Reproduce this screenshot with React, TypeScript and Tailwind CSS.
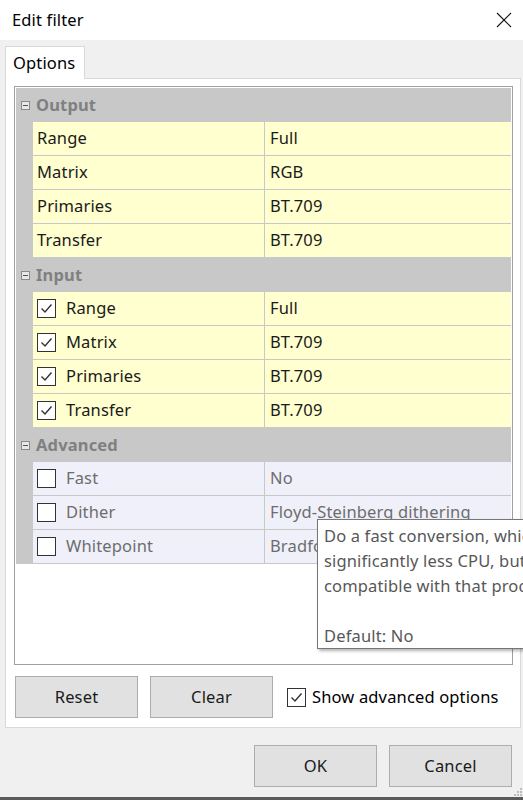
import React from "react";

const font = { fontFamily: '"Noto Sans", "Open Sans", sans-serif' };

function Check({ checked }: { checked: boolean }) {
  return (
    <span className="inline-flex w-[19px] h-[19px] border border-[#333333] bg-white items-center justify-center shrink-0">
      {checked && (
        <svg width="13" height="11" viewBox="0 0 13 11">
          <path d="M1.5 5.5 L5 9 L11.5 1.5" fill="none" stroke="#333333" strokeWidth="1.4" />
        </svg>
      )}
    </span>
  );
}

function Category({ label }: { label: string }) {
  return (
    <div className="h-[34px] flex items-center bg-[#c8c8c8]">
      <div className="w-[17px] flex justify-center pl-[2px]">
        <svg width="9" height="9" viewBox="0 0 9 9">
          <rect x="0.5" y="0.5" width="8" height="8" fill="#e8e8e8" stroke="#8a8a8a" />
          <line x1="2" y1="4.5" x2="7" y2="4.5" stroke="#505050" />
        </svg>
      </div>
      <span className="pl-[3px] font-bold text-[#808080]">{label}</span>
    </div>
  );
}

type RowProps = {
  name: string;
  value: string;
  check?: boolean;
  checked?: boolean;
  bg: string;
  dim?: boolean;
};

function Row({ name, value, check, checked, bg, dim }: RowProps) {
  const color = dim ? "text-[#6d6d6d]" : "text-[#1a1a1a]";
  return (
    <div className="h-[34px] flex bg-[#c8c8c8]">
      <div className="w-[17px] shrink-0" />
      <div className={`flex-1 flex border-b border-[#c8c8c8] ${bg}`}>
        <div className={`w-[232px] shrink-0 flex items-center gap-[10px] pl-[4px] border-r border-[#c8c8c8] ${color}`}>
          {check && <Check checked={!!checked} />}
          <span>{name}</span>
        </div>
        <div className={`flex-1 flex items-center pl-[5px] whitespace-nowrap overflow-hidden ${color}`}>{value}</div>
      </div>
    </div>
  );
}

function Button({ children, className }: { children: React.ReactNode; className?: string }) {
  return (
    <div className={`h-[42px] w-[123px] flex items-center justify-center bg-[#e1e1e1] border border-[#adadad] text-[#1a1a1a] ${className ?? ""}`}>
      {children}
    </div>
  );
}

export default function App() {
  const yellow = "bg-[#ffffcf]";
  const lav = "bg-[#f0f0fa]";
  return (
    <div className="relative w-[523px] h-[800px] overflow-hidden bg-white text-[16.5px] tracking-[0.15px]" style={font}>
      <div className="h-[797px] flex flex-col bg-[#f0f0f0]">
        {/* Title bar */}
        <div className="h-[40px] bg-white flex items-center justify-between pl-[12px] pr-[11px] shrink-0">
          <span className="text-[#000]">Edit filter</span>
          <svg width="16" height="16" viewBox="0 0 16 16">
            <path d="M1 1 L15 15 M15 1 L1 15" stroke="#111" strokeWidth="1.1" />
          </svg>
        </div>
        {/* Body */}
        <div className="flex flex-col pl-[5px] pr-[2px] pt-[6px]">
          <div className="flex">
            <div className="relative z-10 -mb-px h-[33px] w-[80px] bg-white border-l border-t border-r border-[#d9d9d9] flex items-center pl-[7px] text-[#000]">
              Options
            </div>
          </div>
          <div className="h-[650px] bg-white border border-[#d9d9d9] flex flex-col pl-[8px] pr-[7px] pt-[7px]">
            <div className="h-[579px] border border-[#a0a0a0] p-px flex flex-col bg-white">
              <Category label="Output" />
              <Row name="Range" value="Full" bg={yellow} />
              <Row name="Matrix" value="RGB" bg={yellow} />
              <Row name="Primaries" value="BT.709" bg={yellow} />
              <Row name="Transfer" value="BT.709" bg={yellow} />
              <Category label="Input" />
              <Row name="Range" value="Full" bg={yellow} check checked />
              <Row name="Matrix" value="BT.709" bg={yellow} check checked />
              <Row name="Primaries" value="BT.709" bg={yellow} check checked />
              <Row name="Transfer" value="BT.709" bg={yellow} check checked />
              <Category label="Advanced" />
              <Row name="Fast" value="No" bg={lav} check dim />
              <Row name="Dither" value="Floyd-Steinberg dithering" bg={lav} check dim />
              <Row name="Whitepoint" value="Bradford" bg={lav} check dim />
            </div>
            <div className="flex items-center mt-[11px] pl-px">
              <Button>Reset</Button>
              <Button className="ml-[12px]">Clear</Button>
              <div className="ml-[14px] flex items-center gap-[6px] text-[#000]">
                <Check checked />
                <span>Show advanced options</span>
              </div>
            </div>
          </div>
          <div className="flex justify-end gap-[12px] pr-[9px] mt-[17px]">
            <Button>OK</Button>
            <Button>Cancel</Button>
          </div>
        </div>
      </div>
      <div className="h-[3px] bg-[#5a5a5a]" />
      {/* resize grip */}
      <div className="absolute right-[1px] bottom-[4px] grid grid-cols-3 gap-[1px]">
        <span className="w-[2px] h-[2px]" />
        <span className="w-[2px] h-[2px]" />
        <span className="w-[2px] h-[2px] bg-[#bdbdbd]" />
        <span className="w-[2px] h-[2px]" />
        <span className="w-[2px] h-[2px] bg-[#bdbdbd]" />
        <span className="w-[2px] h-[2px] bg-[#bdbdbd]" />
        <span className="w-[2px] h-[2px] bg-[#bdbdbd]" />
        <span className="w-[2px] h-[2px] bg-[#bdbdbd]" />
        <span className="w-[2px] h-[2px] bg-[#bdbdbd]" />
      </div>
      {/* Tooltip */}
      <div className="absolute left-[317px] top-[519px] w-[260px] h-[130px] bg-white border border-[#767676] shadow-[2px_2px_3px_rgba(0,0,0,0.3)] pl-[6px] pt-[3px] text-[#575757] leading-[25px] whitespace-nowrap">
        <div>Do a fast conversion, which uses</div>
        <div>significantly less CPU, but may not be</div>
        <div>compatible with that produced by</div>
        <div>&nbsp;</div>
        <div>Default: No</div>
      </div>
    </div>
  );
}
